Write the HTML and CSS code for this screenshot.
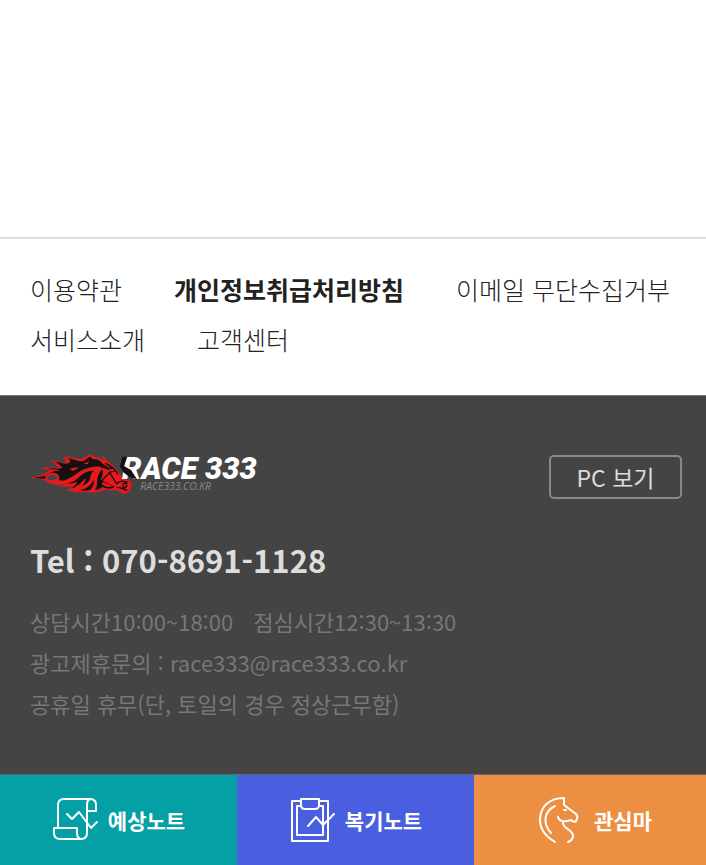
FILE: index.html
```html
<!DOCTYPE html>
<html lang="ko">
<head>
  <meta charset="UTF-8">
  <meta name="viewport" content="width=device-width, initial-scale=1">
  <title>RACE 333</title>
  <link rel="stylesheet" href="styles.css">
</head>
<body>
  <main class="content"></main>

  <footer class="footer">
    <ul class="footer-links">
      <li><a href="#">이용약관</a></li>
      <li><a href="#" class="strong">개인정보취급처리방침</a></li>
      <li><a href="#">이메일 무단수집거부</a></li>
      <li><a href="#">서비스소개</a></li>
      <li><a href="#">고객센터</a></li>
    </ul>

    <div class="footer-info">
      <div class="footer-top">
        <a href="#" class="logo" aria-label="RACE 333">
          <svg viewBox="27 30 690 147" width="230" height="49">
            <!-- red flame and head -->
            <path fill="#e8191c" fill-rule="evenodd" d="M27 115 C45 105 58 109 70 101 C76 98 82 94 88 91 C76 90 68 85 60 86 C78 78 100 86 116 84 C104 76 100 66 87 62 C104 60 118 70 132 68 C139 60 134 57 124 54 C140 46 158 54 174 58 C184 59 190 51 200 45 C210 44 220 48 232 55 C238 56 242 59 247 58 C244 53 246 50 243 47 C251 50 256 59 260 64 C274 74 286 86 296 101 C303 112 310 119 324 121 C333 127 333 137 328 147 C324 159 316 164 304 160 C296 155 290 151 280 150 C270 151 262 151 254 148 C238 156 216 161 197 156 C188 159 176 154 164 157 C156 156 148 151 136 152 C145 147 150 143 155 138 C140 140 126 140 112 141 C122 138 128 134 134 130 C116 139 88 134 76 124 C62 114 45 116 27 115Z M77 115 C82 122 104 123 109 114 C110 104 84 100 77 115Z"/>
            <!-- mane -->
            <path fill="#161012" d="M40 113 C58 109 72 110 84 101 C92 94 106 93 118 91 C104 88 94 88 80 87 C94 83 112 91 125 82 C116 76 108 66 100 65 C119 66 138 77 146 67 C150 60 144 56 134 55 C151 52 166 65 184 64 C194 62 198 53 207 50 C215 52 212 59 222 58 C232 58 240 64 246 73 C257 76 264 83 267 91 C255 85 244 86 238 80 C218 78 195 84 180 92 C163 102 151 114 135 119 C126 122 118 123 113 119 C119 110 111 99 98 99 C81 97 71 107 73 115 C62 117 52 113 40 113Z"/>
            <!-- neck -->
            <path fill="#161012" d="M138 130 C157 128 167 118 178 108 C190 96 205 91 220 92 C211 98 208 105 207 115 C205 127 193 134 181 139 C190 130 194 121 195 113 C185 124 169 140 151 146 C161 138 167 130 170 124 C161 129 150 132 138 130Z"/>
            <path fill="#161012" d="M175 150 C194 148 212 136 217 119 C221 129 216 142 207 150 C197 154 185 152 175 150Z"/>
            <path fill="#161012" d="M222 150 C232 138 225 121 232 106 C236 98 240 92 243 88 C247 97 246 108 239 120 L282 140 C269 149 253 145 244 140 C239 145 231 150 222 150Z"/>
            <path fill="#e8191c" d="M246 126 L276 139 C264 143 252 140 242 133Z M186 72 L205 64 L200 72Z M146 88 C153 83 164 81 174 83 L156 93Z"/>
            <!-- face and bridle -->
            <path fill="none" stroke="#161012" stroke-width="4" d="M253 70 C271 77 284 90 291 103 M241 124 L266 97 L287 132 M268 96 L284 91 M264 82 L273 87 M286 132 C296 121 310 121 320 128 M286 142 C300 142 310 148 318 151 M304 132 C315 126 321 135 314 142 C306 144 302 138 308 136"/>
            <text class="logo-name" x="303" y="117">RACE 333</text>
            <path fill="#161012" d="M304 50 L319 50 L309 78 L330 90 L348 118 L326 112 L306 96 L297 79Z"/>
            <text class="logo-domain" x="358" y="150">RACE333.CO.KR</text>
          </svg>
        </a>
        <button type="button" class="pc-button">PC 보기</button>
      </div>
      <p class="tel">Tel : 070-8691-1128</p>
      <p class="hours"><span>상담시간10:00~18:00</span><span>점심시간12:30~13:30</span></p>
      <p>광고제휴문의 : race333@race333.co.kr</p>
      <p>공휴일 휴무(단, 토일의 경우 정상근무함)</p>
    </div>
  </footer>

  <nav class="quick-menu">
    <a href="#" class="note">
      <svg viewBox="0 0 48 48" width="48" height="48">
        <path d="M6 31V9Q6 3 12 3H38Q44 3 44 9V15H35V37Q35 43 29 43H8Q2 43 2 37V32H25V37Q25 43 30 43M35 15V9Q35 3 39 3"/>
        <path d="M15 18L20 23L27 16L39 32L45 26"/>
      </svg>
      <span>예상노트</span>
    </a>
    <a href="#" class="review">
      <svg viewBox="0 0 48 48" width="48" height="48">
        <path d="M12 5H3V45H39V5H30M12 10H8V39H34V10H30"/>
        <path d="M12 3H30V9Q30 13 26 13H16Q12 13 12 9Z"/>
        <path d="M19 30L27 21L34 29L45 18"/>
      </svg>
      <span>복기노트</span>
    </a>
    <a href="#" class="horse">
      <svg viewBox="0 0 48 48" width="48" height="48">
        <path d="M17 46C7 40 2 33 2 24C2 10 12 2 26 2V9L38 18Q40 20 39 23L38 25Q36 27 33 24C28 26 21 26 20 21M17 10C5 16 5 28 13 37M25 26C24 33 35 33 35 40Q35 44 30 46M26 14H28"/>
      </svg>
      <span>관심마</span>
    </a>
  </nav>
</body>
</html>
```
FILE: styles.css
```css
* {
  box-sizing: border-box;
}
body {
  margin: 0;
  min-height: 100vh;
  display: flex;
  flex-direction: column;
  background: #fff;
  color: #222;
  font-family: "Noto Sans CJK KR", sans-serif;
  font-size: 24px;
}
a {
  color: inherit;
  text-decoration: none;
}
p {
  margin: 0;
}
.content {
  flex: 1;
}
.footer-links {
  display: flex;
  flex-wrap: wrap;
  column-gap: 52px;
  margin: 0;
  padding: 25px 30px 31px;
  border-top: 2px solid #ddd;
  list-style: none;
  font-size: 25px;
  font-weight: 300;
  line-height: 50px;
}
.footer-links .strong {
  font-weight: 700;
}
.footer-info {
  padding: 54px 24px 50px 30px;
  background: #444;
  border-top: 1px solid #777;
  color: #777;
  font-size: 22px;
  line-height: 41px;
}
.footer-top {
  display: flex;
  justify-content: space-between;
  align-items: flex-start;
  height: 56px;
}
.logo svg {
  display: block;
}
.logo-name {
  fill: #fff;
  font: italic 900 92px Roboto, sans-serif;
}
.logo-domain {
  fill: #888;
  font: italic 400 31px "Open Sans", sans-serif;
}
.pc-button {
  width: 133px;
  height: 44px;
  margin: 5px 0 0;
  padding: 0;
  background: transparent;
  border: 2px solid #888;
  border-radius: 5px;
  color: #ddd;
  font-family: inherit;
  font-size: 23px;
  line-height: 40px;
}
.tel {
  margin: 29px 0 16px;
  color: #ddd;
  font-size: 31px;
  font-weight: 700;
  line-height: 50px;
}
.hours {
  display: flex;
  gap: 20px;
}
.quick-menu {
  display: grid;
  grid-template-columns: 237fr 237fr 232fr;
  height: 91px;
  border-top: 1px solid #666;
  color: #fff;
  font-size: 21px;
  font-weight: 700;
}
.quick-menu a {
  display: flex;
  justify-content: center;
  align-items: center;
  gap: 8px;
}
.quick-menu svg {
  fill: none;
  stroke: #fff;
  stroke-width: 2;
  stroke-linejoin: round;
  stroke-linecap: round;
}
.note {
  background: #05a0a5;
}
.review {
  background: #495fe0;
}
.horse {
  padding-left: 10px;
  background: #ec8f42;
}
```
